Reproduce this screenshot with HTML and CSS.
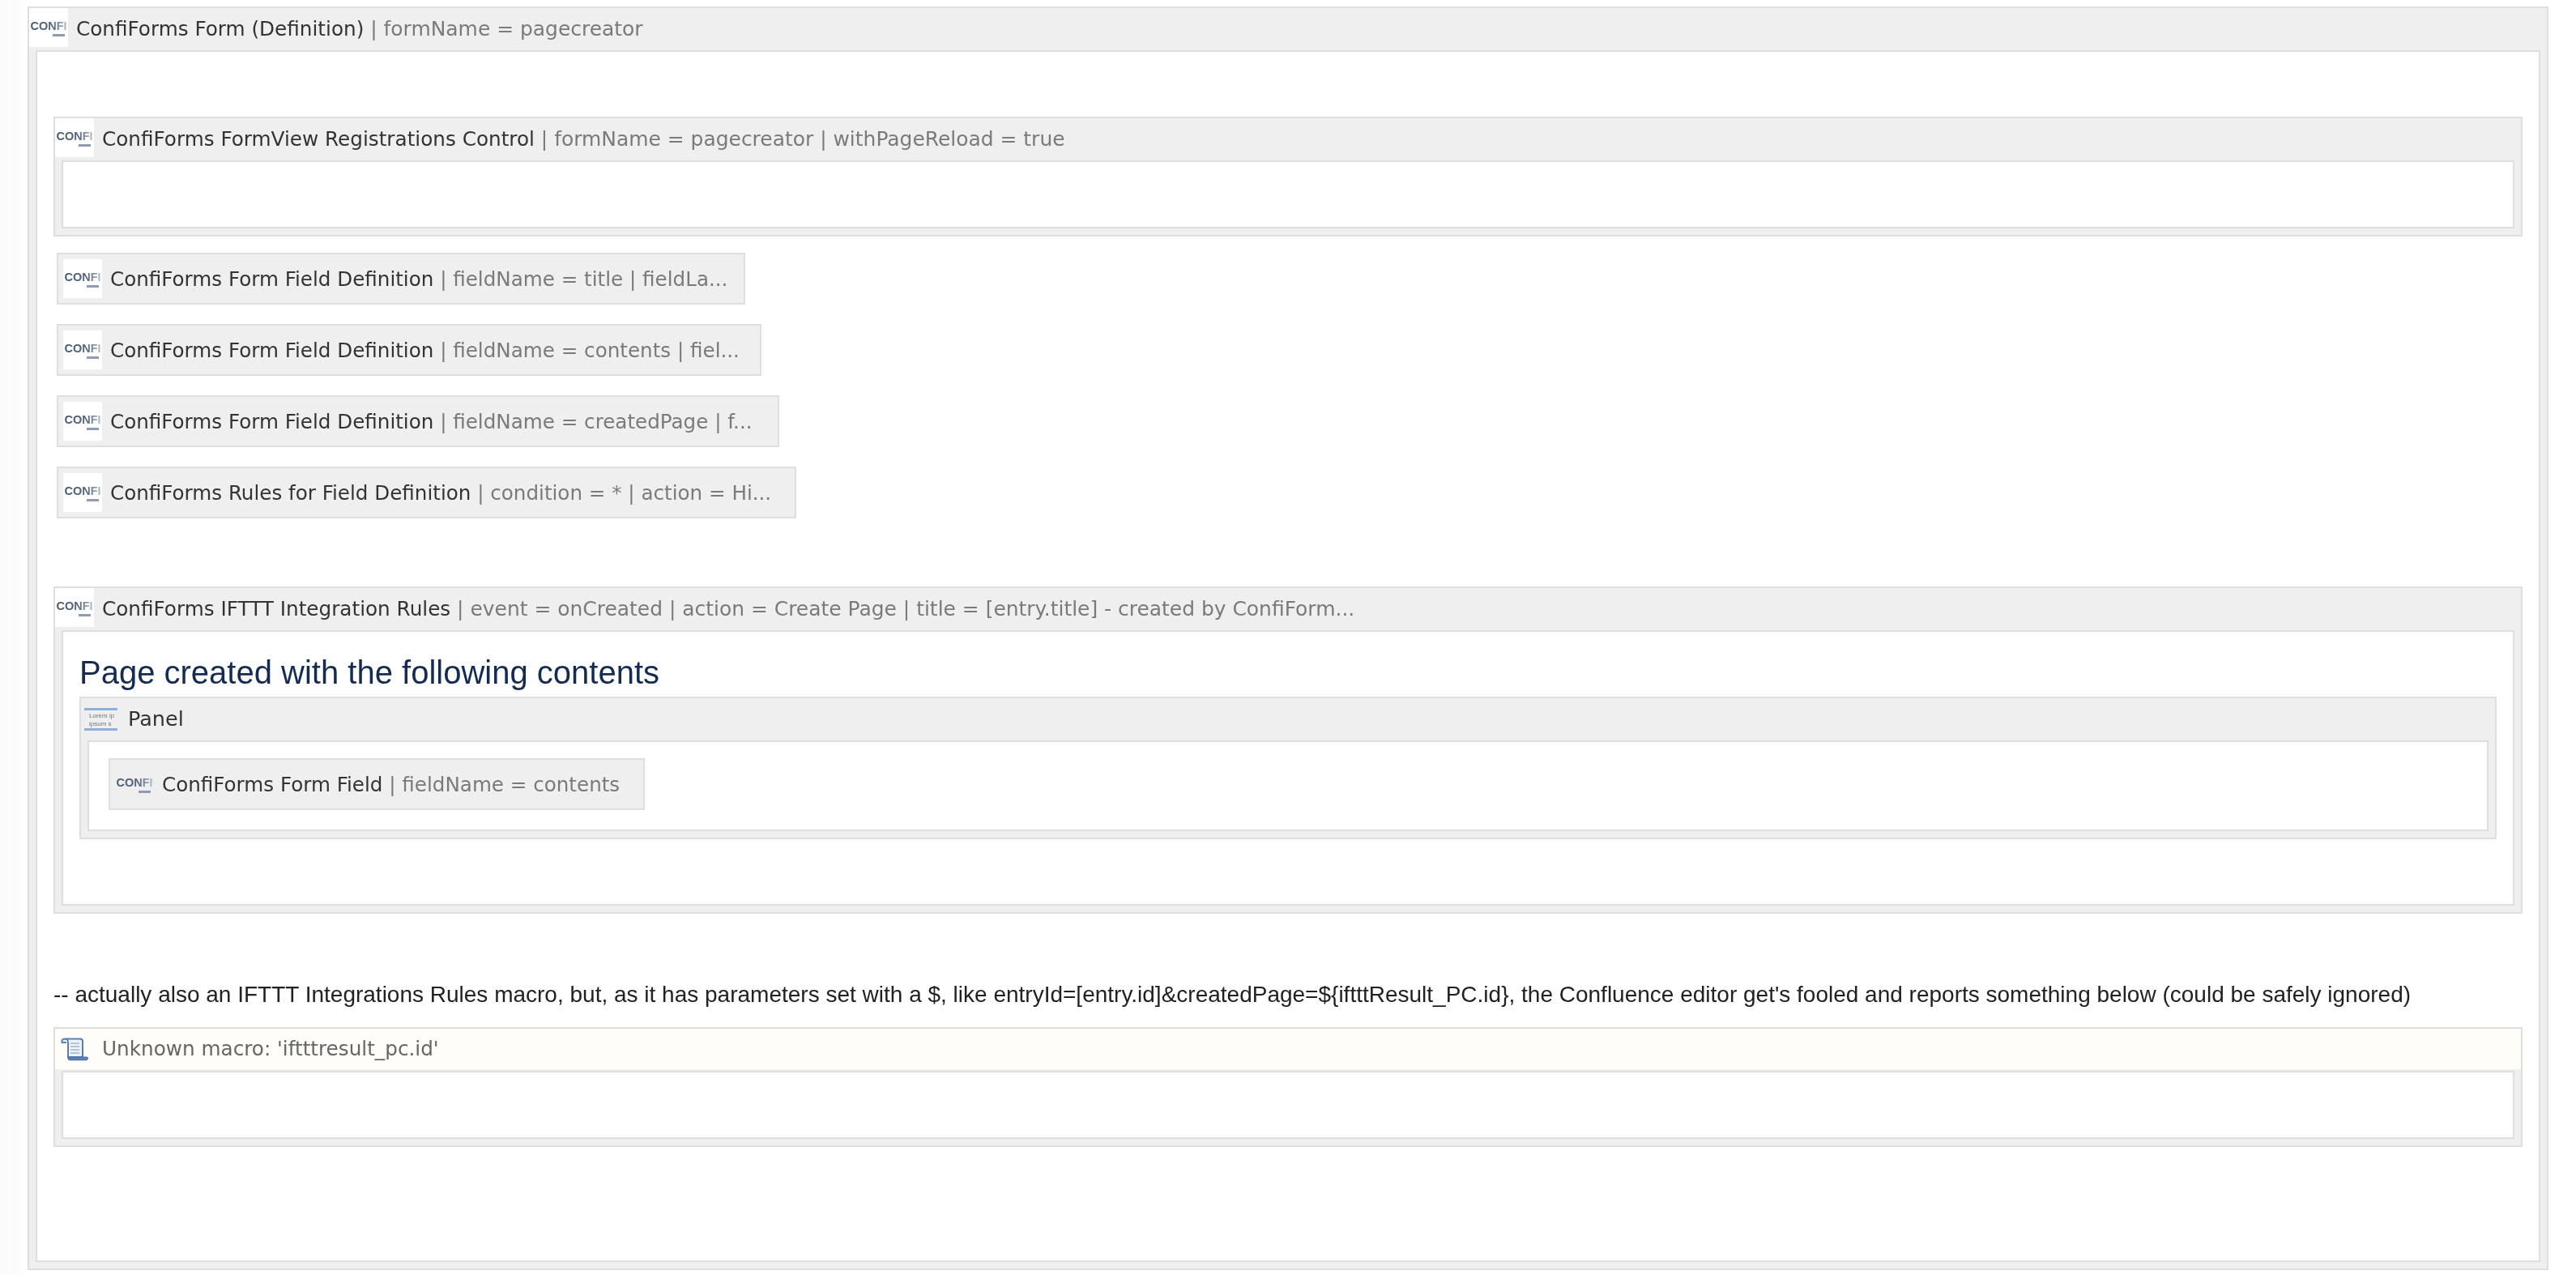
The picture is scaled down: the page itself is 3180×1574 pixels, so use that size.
FILE: index.html
```html
<!DOCTYPE html>
<html lang="en">
<head>
<meta charset="utf-8">
<title>ConfiForms</title>
<link rel="stylesheet" href="styles.css">
</head>
<body>
<svg class="defs" width="0" height="0" aria-hidden="true">
  <defs>
    <linearGradient id="fade" x1="0" x2="1" y1="0" y2="0">
      <stop offset="0" stop-color="#4a5b75"/>
      <stop offset=".6" stop-color="#56667e"/>
      <stop offset="1" stop-color="#b9c1cd"/>
    </linearGradient>
  </defs>
</svg>
<div class="page">
  <section class="macro">
    <header class="head">
      <span class="icon"><svg viewBox="0 0 48 48" width="48" height="48"><text class="logo" x="1.5" y="27">CONFI</text><rect class="bar" x="29" y="32" width="15" height="3"/></svg></span>
      <span class="title">ConfiForms Form (Definition)</span><span class="params"> | formName = pagecreator</span>
    </header>
    <div class="body top">
      <section class="macro first">
        <header class="head">
          <span class="icon"><svg viewBox="0 0 48 48" width="48" height="48"><text class="logo" x="1.5" y="27">CONFI</text><rect class="bar" x="29" y="32" width="15" height="3"/></svg></span>
          <span class="title">ConfiForms FormView Registrations Control</span><span class="params"> | formName = pagecreator | withPageReload = true</span>
        </header>
        <div class="body empty"></div>
      </section>

      <div class="chip w1">
        <span class="icon"><svg viewBox="0 0 48 48" width="48" height="48"><text class="logo" x="1.5" y="27">CONFI</text><rect class="bar" x="29" y="32" width="15" height="3"/></svg></span>
        <span class="title">ConfiForms Form Field Definition</span><span class="params"> | fieldName = title | fieldLa...</span>
      </div>
      <div class="chip w2">
        <span class="icon"><svg viewBox="0 0 48 48" width="48" height="48"><text class="logo" x="1.5" y="27">CONFI</text><rect class="bar" x="29" y="32" width="15" height="3"/></svg></span>
        <span class="title">ConfiForms Form Field Definition</span><span class="params"> | fieldName = contents | fiel...</span>
      </div>
      <div class="chip w3">
        <span class="icon"><svg viewBox="0 0 48 48" width="48" height="48"><text class="logo" x="1.5" y="27">CONFI</text><rect class="bar" x="29" y="32" width="15" height="3"/></svg></span>
        <span class="title">ConfiForms Form Field Definition</span><span class="params"> | fieldName = createdPage | f...</span>
      </div>
      <div class="chip w4">
        <span class="icon"><svg viewBox="0 0 48 48" width="48" height="48"><text class="logo" x="1.5" y="27">CONFI</text><rect class="bar" x="29" y="32" width="15" height="3"/></svg></span>
        <span class="title">ConfiForms Rules for Field Definition</span><span class="params"> | condition = * | action = Hi...</span>
      </div>

      <section class="macro ifttt">
        <header class="head">
          <span class="icon"><svg viewBox="0 0 48 48" width="48" height="48"><text class="logo" x="1.5" y="27">CONFI</text><rect class="bar" x="29" y="32" width="15" height="3"/></svg></span>
          <span class="title">ConfiForms IFTTT Integration Rules</span><span class="params"> | event = onCreated | action = Create Page | title = [entry.title] - created by ConfiForm...</span>
        </header>
        <div class="body rich">
          <h1 class="heading">Page created with the following contents</h1>
          <section class="macro panel">
            <header class="head">
              <span class="icon"><svg viewBox="0 0 41 28" width="41" height="28"><rect y="0" width="41" height="3" fill="#8fb0d6"/><rect y="25" width="41" height="3" fill="#8fb0d6"/><text class="lorem" x="6" y="12">Lorem ip</text><text class="lorem" x="6" y="22">ipsum s</text></svg></span>
              <span class="title">Panel</span>
            </header>
            <div class="body panel-body">
              <div class="chip w5">
                <span class="icon"><svg viewBox="0 0 48 48" width="48" height="48"><text class="logo" x="1.5" y="27">CONFI</text><rect class="bar" x="29" y="32" width="15" height="3"/></svg></span>
                <span class="title">ConfiForms Form Field</span><span class="params"> | fieldName = contents</span>
              </div>
            </div>
          </section>
        </div>
      </section>

      <p class="note">-- actually also an IFTTT Integrations Rules macro, but, as it has parameters set with a $, like entryId=[entry.id]&amp;createdPage=${iftttResult_PC.id}, the Confluence editor get's fooled and reports something below (could be safely ignored)</p>

      <section class="macro unknown">
        <header class="head">
          <span class="icon"><svg viewBox="0 0 34 29" width="34" height="29"><path d="M5 1.5H24a3 3 0 0 1 3 3V24H9V5.5C9 3 7 1.5 5 1.5C2.5 1.5 1 3 1.5 6H7" fill="#eef2f8" stroke="#5a7fb5" stroke-width="2"/><path d="M12 7H23M12 11H23M12 15H23M12 19H23" stroke="#b4c4dc" stroke-width="2"/><path d="M9 24V25.5a2.2 2.2 0 0 0 2.2 2.2H31a2.2 2.2 0 0 0 1.8-3.7Z" fill="#5f83b8" stroke="#46689e" stroke-width="1"/></svg></span>
          <span class="title unk">Unknown macro: 'iftttresult_pc.id'</span>
        </header>
        <div class="body empty"></div>
      </section>
    </div>
  </section>
</div>
</body>
</html>
```
FILE: styles.css
```css
* { box-sizing: border-box; }
html, body { margin: 0; padding: 0; background: #fff; }
body { width: 3180px; height: 1574px; overflow: hidden; }
.defs { position: absolute; }
.page { padding: 8px 34px 6px 34px; background: linear-gradient(90deg, #fafafa 0, #fcfcfc 20px, #fff 32px); height: 1574px; }
.macro { border: 2px solid #dedede; background: #efefef; padding: 0 8px 8px 8px; }
.head { display: flex; align-items: center; height: 52px; margin: 0 -8px; padding-right: 8px; white-space: pre; font: 24.7px/1 "DejaVu Sans", sans-serif; }
.icon { flex: none; width: 48px; height: 48px; margin-top: -4px; margin-right: 10px; display: flex; align-items: center; justify-content: center; background: #fff; }
.title { color: #333; filter: blur(.5px); }
.params { color: #7a7a7a; font-size: 24.95px; filter: blur(.5px); }
.body { background: #fff; border: 2px solid #dedede; }
.top { height: 1496px; padding: 0 20px; }
.first { margin-top: 80px; margin-bottom: 20px; }
.empty { height: 84px; }
.chip { display: flex; align-items: center; height: 64px; margin: 0 0 24px 4px; padding: 6px; border: 2px solid #dedede; background: #efefef; white-space: pre; font: 24.6px/1 "DejaVu Sans", sans-serif; }
.chip .icon { margin-top: 0; margin-right: 10px; }
.chip .title, .chip .params { margin-top: 3px; }
.chip .params { font-size: 24.6px; }
.w1 { width: 850px; }
.w2 { width: 870px; }
.w3 { width: 892px; }
.w4 { width: 913px; }
.w5 { width: 662px; margin: 0 0 0 4px; }
.ifttt { margin-top: 84px; }
.rich { height: 340px; padding: 0 20px; }
.heading { margin: 0; height: 80px; padding-top: 21px; font: 400 40px/58px "Liberation Sans", Arial, sans-serif; color: #142c54; filter: blur(.4px); }
.panel .icon { background: transparent; margin-top: 0; }
.panel .title { font-size: 25.5px; }
.panel .chip .title { font-size: 24.6px; }
.panel-body { height: 112px; padding: 20px 20px 0 20px; }
.note { margin: 82px 0 0 0; height: 58px; font: 28px/36px "Liberation Sans", Arial, sans-serif; color: #222; white-space: nowrap; filter: blur(.4px); }
.unknown .head { background: #fffdf7; height: 50px; margin-bottom: 2px; }
.unknown .icon { background: transparent; margin-top: 0; }
.unk { color: #666; }
.logo { font: 700 14.5px "Liberation Sans", sans-serif; fill: url(#fade); filter: blur(.7px); }
.bar { fill: #8c9db3; filter: blur(.6px); }
.lorem { font: 400 8px "Liberation Sans", sans-serif; fill: #6d7681; filter: blur(.4px); }
```
